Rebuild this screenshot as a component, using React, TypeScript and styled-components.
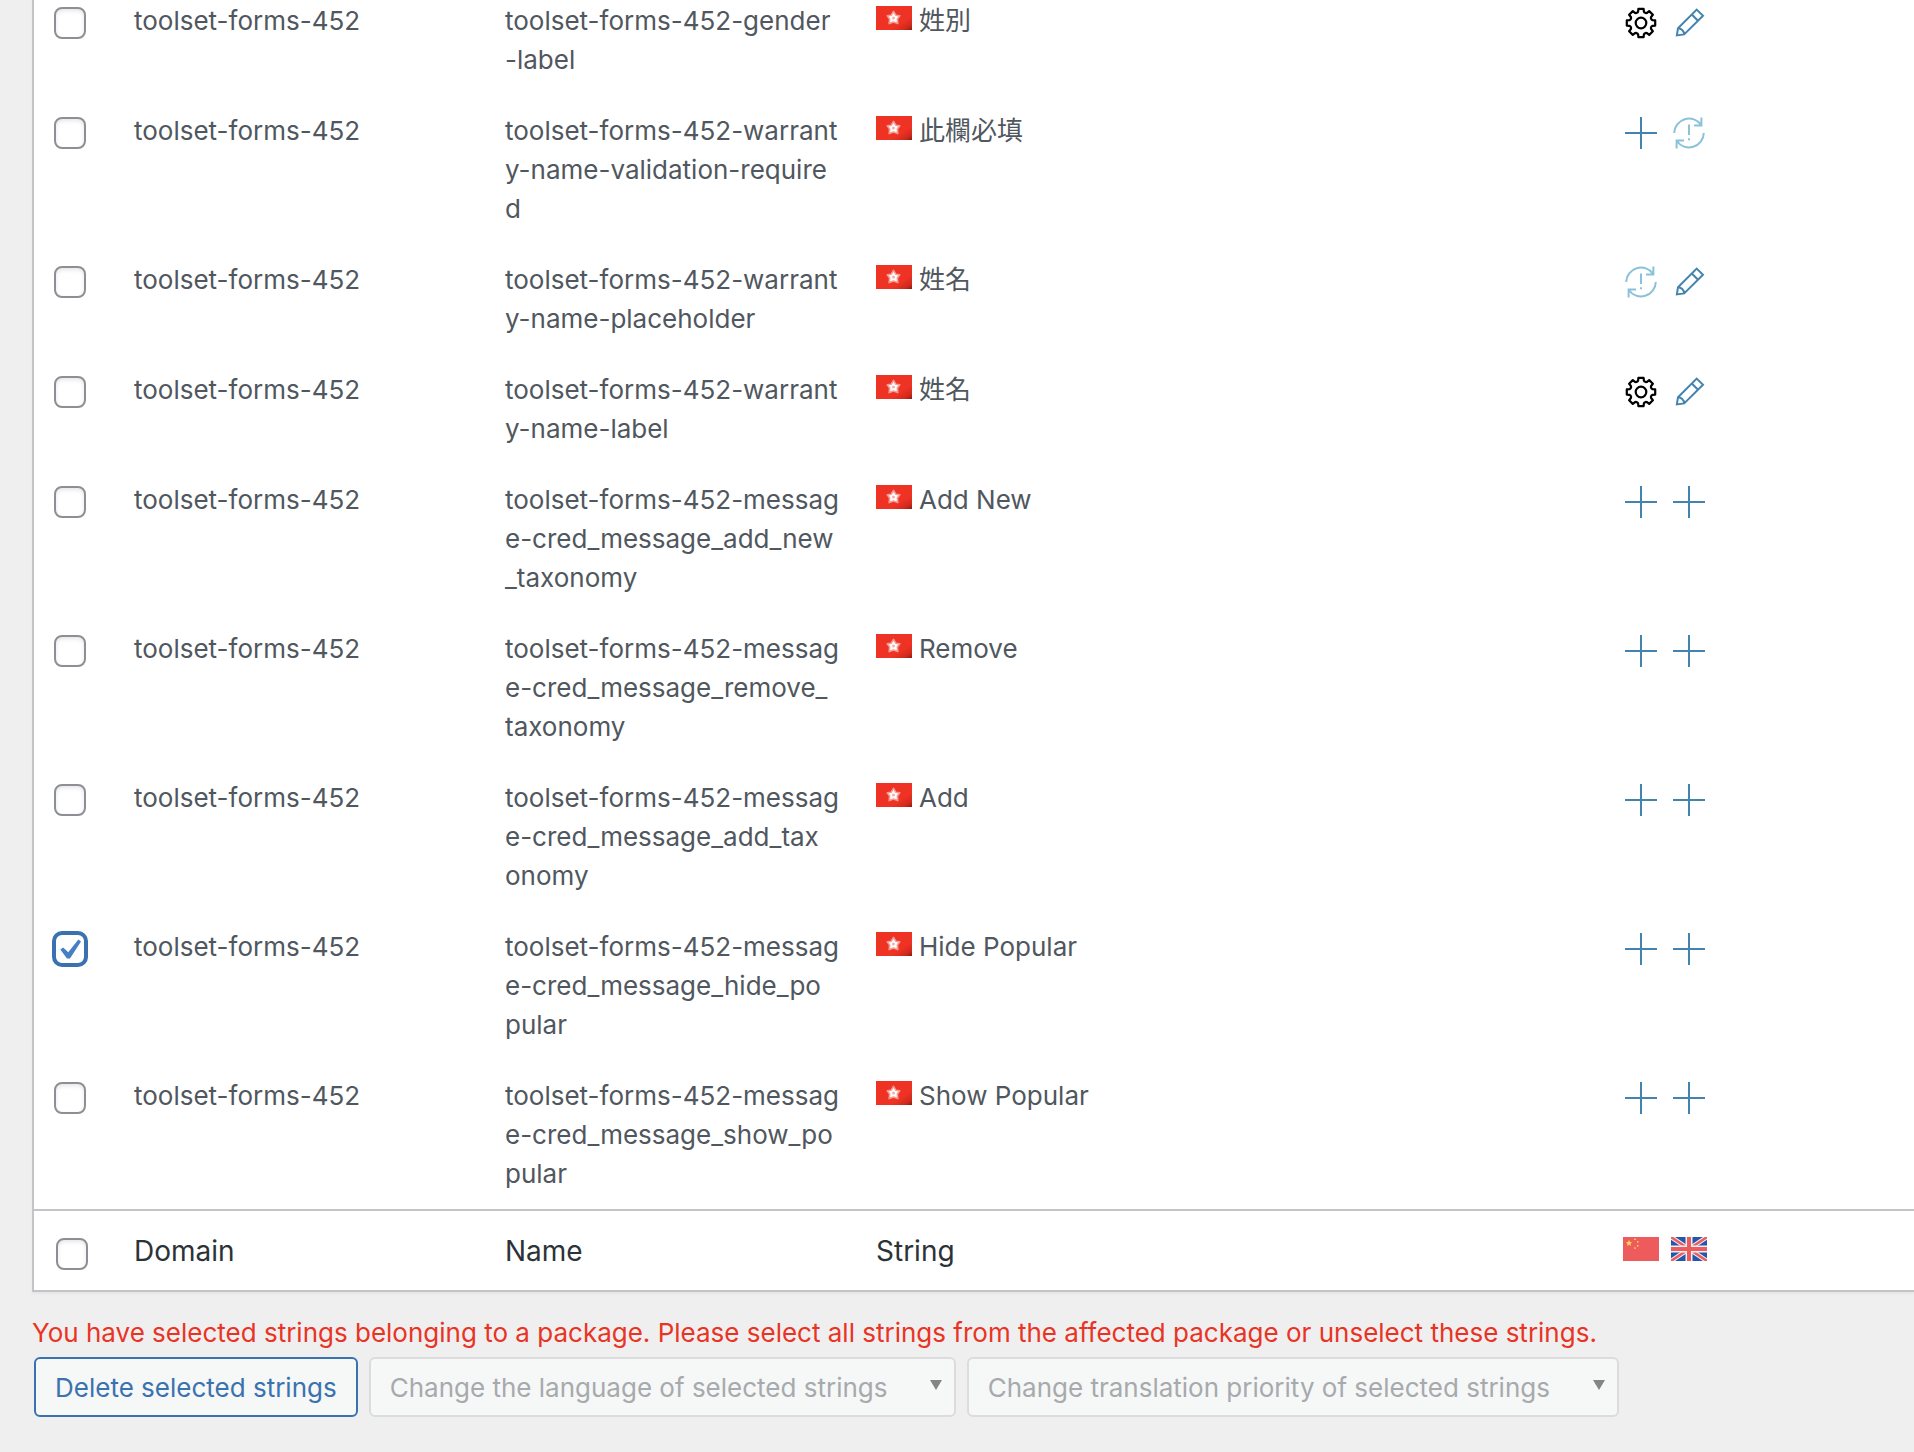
import React, { useState } from "react";
import styled, { createGlobalStyle } from "styled-components";

const GlobalStyle = createGlobalStyle`
  *, *::before, *::after { box-sizing: border-box; }
  body {
    margin: 0;
    background: #efefef;
    color: #50575e;
    font: 400 26px/39px Inter, "Noto Sans CJK TC", sans-serif;
  }
`;

const Page = styled.main`
  min-height: 100vh;
  padding-left: 32px;
  overflow: hidden;
`;

const Table = styled.table`
  width: 100%;
  margin-top: -15px;
  table-layout: fixed;
  border-collapse: separate;
  border-spacing: 0;
  background: #fff;
  border: solid #c3c4c7;
  border-width: 0 0 2px 2px;
  box-shadow: 0 2px 2px rgba(0, 0, 0, 0.04);
`;

const Col = styled.col<{ $w?: number }>`
  width: ${(p) => (p.$w ? `${p.$w}px` : "auto")};
`;

const Cell = styled.td`
  padding: 16px 20px;
  vertical-align: top;
  text-align: left;
  white-space: nowrap;
`;

const CheckCell = styled.th`
  padding: 22px 0 0 20px;
  vertical-align: top;
  text-align: left;
  line-height: 0;
`;

const IconCell = styled.td`
  padding: 20px 20px 0;
  vertical-align: top;
`;

const FootCell = styled.th`
  padding: 20px 20px 18px;
  border-top: 2px solid #c3c4c7;
  vertical-align: top;
  text-align: left;
  color: #2c3338;
  font-size: 28px;
  font-weight: 400;
  line-height: 41px;
`;

const FootCheckCell = styled(FootCell)`
  padding: 27px 0 0 22px;
  line-height: 0;
`;

const FootFlagCell = styled(FootCell)`
  padding: 26px 20px 0;
`;

const Checkbox = styled.input`
  appearance: none;
  display: inline-grid;
  place-content: center;
  width: 32px;
  height: 32px;
  margin: 0;
  border: 2px solid #8c8f94;
  border-radius: 8px;
  background: #fff;
  box-shadow: inset 0 2px 4px rgba(0, 0, 0, 0.1);

  &:checked {
    border-color: #3a72b0;
    box-shadow: 0 0 0 2px #3a72b0;
  }
  &:checked::before {
    content: "";
    width: 22px;
    height: 20px;
    background: #4680c2;
    clip-path: polygon(6% 53%, 19% 42%, 42% 66%, 88% 2%, 100% 12%, 50% 98%, 36% 98%);
  }
`;

const IconRow = styled.div`
  display: flex;
  gap: 12px;
`;

const IconButton = styled.button`
  display: block;
  width: 36px;
  height: 36px;
  padding: 0;
  border: 0;
  background: none;
  cursor: pointer;
`;

const Icon = styled.svg`
  display: block;
  width: 36px;
  height: 36px;
  fill: none;
  stroke: #4384ae;
  stroke-width: 2;
`;

const Flag = styled.svg`
  width: 36px;
  height: 24px;
`;

const StringFlag = styled(Flag)`
  margin-right: 7px;
`;

const BlockFlag = styled(Flag)`
  display: block;
`;

const Warning = styled.p`
  margin: 21px 0 5px;
  color: #e93425;
`;

const Actions = styled.div`
  display: flex;
  gap: 11px;
  padding-left: 2px;
`;

const DeleteButton = styled.button`
  height: 60px;
  padding: 0 19px;
  border: 2px solid #3a72b0;
  border-radius: 6px;
  background: #f6f7f7;
  color: #3a72b0;
  font: inherit;
`;

const SelectWrap = styled.div`
  position: relative;
`;

const Select = styled.select`
  appearance: none;
  display: block;
  height: 60px;
  padding: 0 66px 0 19px;
  border: 2px solid #dcdcde;
  border-radius: 6px;
  background: #f6f7f7;
  color: #a7aaad;
  font: inherit;
  opacity: 1;
`;

const Arrow = styled.svg`
  position: absolute;
  top: 23px;
  right: 14px;
  width: 12px;
  height: 10px;
  fill: #858585;
  pointer-events: none;
`;

type Status = "gear" | "pencil" | "plus" | "sync";

const gearPath = (() => {
  const tooth = [
    [-3.6, -10.4],
    [-2.9, -11.4],
    [-2.6, -14.2],
    [2.6, -14.2],
    [2.9, -11.4],
    [3.6, -10.4],
  ];
  const points: string[] = [];
  for (let i = 0; i < 8; i++) {
    const a = (i * Math.PI) / 4;
    tooth.forEach(([x, y]) => {
      const px = 18 + x * Math.cos(a) - y * Math.sin(a);
      const py = 18 + x * Math.sin(a) + y * Math.cos(a);
      points.push(`${px.toFixed(2)} ${py.toFixed(2)}`);
    });
  }
  return `M${points.join("L")}Z`;
})();

const labels: Record<Status, string> = {
  gear: "Translation in progress",
  pencil: "Edit translation",
  plus: "Add translation",
  sync: "Translation needs update",
};

function StatusIcon({ status }: { status: Status }) {
  switch (status) {
    case "gear":
      return (
        <Icon viewBox="0 0 36 36">
          <g stroke="#000" strokeLinejoin="round" strokeWidth="2.2">
            <path d={gearPath} />
            <circle cx="18" cy="18" r="5.3" />
          </g>
        </Icon>
      );
    case "pencil":
      return (
        <Icon viewBox="0 0 36 36">
          <path d="M25.7 4.6L32 10.8L13.2 29.4L5.9 30.4L7 23.2ZM20.8 9.5L27 15.7M7 23.2C10 23.2 13.2 26 13.2 29.4" />
        </Icon>
      );
    case "plus":
      return (
        <Icon viewBox="0 0 36 36">
          <path d="M2 18H34M18 2V34" />
        </Icon>
      );
    case "sync":
      return (
        <Icon viewBox="0 0 36 36">
          <g stroke="#8ac2da">
            <path d="M3.2 18A14.8 14.8 0 0 1 30.2 10M30.4 2.6V10.4H23M32.8 18A14.8 14.8 0 0 1 5.8 26M5.6 33.4V25.6H13" />
            <path d="M18 9.5V20M18 23.2V25.2" />
          </g>
        </Icon>
      );
  }
}

function HongKongFlag() {
  return (
    <StringFlag viewBox="0 0 36 24" role="img" aria-label="Hong Kong">
      <defs>
        <linearGradient id="hkShade" x1="0" y1="0" x2="1" y2="1">
          <stop offset="0.7" stopColor="#ee3224" />
          <stop offset="0.88" stopColor="#cf2a1c" />
          <stop offset="1" stopColor="#8c1a10" />
        </linearGradient>
      </defs>
      <rect width="36" height="24" fill="url(#hkShade)" />
      <path
        d="M17.5 5.4L19.8 9.2L23.8 9.8L21.4 13L21.8 17.6L17.5 16L13.2 17.6L13.6 13L11.2 9.8L15.2 9.2Z"
        fill="#fff"
        stroke="#f79a92"
        strokeWidth="1.6"
        strokeLinejoin="round"
      />
      <circle cx="17.5" cy="12" r="1.5" fill="#f9aea8" />
    </StringFlag>
  );
}

function ChinaFlag() {
  return (
    <BlockFlag viewBox="0 0 36 24" role="img" aria-label="Chinese">
      <rect width="36" height="24" fill="#ed5b5d" />
      <g fill="#fbd85a">
        <path d="M6 2.8L6.9 5.1L9.2 5.2L7.4 6.7L8 9L6 7.7L4 9L4.6 6.7L2.8 5.2L5.1 5.1Z" />
        <rect x="11.2" y="1.6" width="1.6" height="1.4" />
        <rect x="14" y="4" width="1.4" height="1.6" />
        <rect x="14" y="8" width="1.4" height="1.6" />
        <rect x="11.2" y="10.4" width="1.6" height="1.4" />
      </g>
    </BlockFlag>
  );
}

function UkFlag() {
  return (
    <BlockFlag viewBox="0 0 36 24" role="img" aria-label="English">
      <rect width="36" height="24" fill="#2557a8" />
      <path d="M0 0L36 24M36 0L0 24" stroke="#e6eaf2" strokeWidth="4.6" />
      <path d="M0 0L36 24M36 0L0 24" stroke="#ed5b5d" strokeWidth="2.4" />
      <path d="M18 0V24M0 12H36" stroke="#f0f0f4" strokeWidth="7" />
      <path d="M18 0V24M0 12H36" stroke="#ed5b5d" strokeWidth="4" />
    </BlockFlag>
  );
}

type StringRow = {
  name: string[];
  text: string;
  icons: [Status, Status];
};

const DOMAIN = "toolset-forms-452";

const rows: StringRow[] = [
  { name: ["toolset-forms-452-gender", "-label"], text: "姓別", icons: ["gear", "pencil"] },
  { name: ["toolset-forms-452-warrant", "y-name-validation-require", "d"], text: "此欄必填", icons: ["plus", "sync"] },
  { name: ["toolset-forms-452-warrant", "y-name-placeholder"], text: "姓名", icons: ["sync", "pencil"] },
  { name: ["toolset-forms-452-warrant", "y-name-label"], text: "姓名", icons: ["gear", "pencil"] },
  { name: ["toolset-forms-452-messag", "e-cred_message_add_new", "_taxonomy"], text: "Add New", icons: ["plus", "plus"] },
  { name: ["toolset-forms-452-messag", "e-cred_message_remove_", "taxonomy"], text: "Remove", icons: ["plus", "plus"] },
  { name: ["toolset-forms-452-messag", "e-cred_message_add_tax", "onomy"], text: "Add", icons: ["plus", "plus"] },
  { name: ["toolset-forms-452-messag", "e-cred_message_hide_po", "pular"], text: "Hide Popular", icons: ["plus", "plus"] },
  { name: ["toolset-forms-452-messag", "e-cred_message_show_po", "pular"], text: "Show Popular", icons: ["plus", "plus"] },
];

function ActionSelect({ label }: { label: string }) {
  return (
    <SelectWrap>
      <Select disabled aria-label={label}>
        <option>{label}</option>
      </Select>
      <Arrow viewBox="0 0 12 10" aria-hidden="true">
        <path d="M0 0H12L6 10Z" />
      </Arrow>
    </SelectWrap>
  );
}

export default function App() {
  const [selected, setSelected] = useState<number[]>([7]);
  const toggle = (i: number) =>
    setSelected((s) => (s.includes(i) ? s.filter((n) => n !== i) : [...s, i]));
  const all = selected.length === rows.length;

  return (
    <>
      <GlobalStyle />
      <Page>
        <Table>
          <colgroup>
            <Col $w={80} />
            <Col $w={371} />
            <Col $w={371} />
            <Col />
            <Col $w={311} />
          </colgroup>
          <tbody>
            {rows.map((row, i) => (
              <tr key={i}>
                <CheckCell scope="row">
                  <Checkbox
                    type="checkbox"
                    aria-label={`Select ${row.name.join("")}`}
                    checked={selected.includes(i)}
                    onChange={() => toggle(i)}
                  />
                </CheckCell>
                <Cell>{DOMAIN}</Cell>
                <Cell>
                  {row.name.map((part, n) => (
                    <React.Fragment key={n}>
                      {n > 0 && <br />}
                      {part}
                    </React.Fragment>
                  ))}
                </Cell>
                <Cell>
                  <HongKongFlag />
                  {row.text}
                </Cell>
                <IconCell>
                  <IconRow>
                    {row.icons.map((status, n) => (
                      <IconButton key={n} type="button" aria-label={labels[status]}>
                        <StatusIcon status={status} />
                      </IconButton>
                    ))}
                  </IconRow>
                </IconCell>
              </tr>
            ))}
          </tbody>
          <tfoot>
            <tr>
              <FootCheckCell>
                <Checkbox
                  type="checkbox"
                  aria-label="Select all"
                  checked={all}
                  onChange={() => setSelected(all ? [] : rows.map((_, i) => i))}
                />
              </FootCheckCell>
              <FootCell scope="col">Domain</FootCell>
              <FootCell scope="col">Name</FootCell>
              <FootCell scope="col">String</FootCell>
              <FootFlagCell scope="col">
                <IconRow>
                  <ChinaFlag />
                  <UkFlag />
                </IconRow>
              </FootFlagCell>
            </tr>
          </tfoot>
        </Table>
        <Warning>
          You have selected strings belonging to a package. Please select all strings from the
          affected package or unselect these strings.
        </Warning>
        <Actions>
          <DeleteButton type="button">Delete selected strings</DeleteButton>
          <ActionSelect label="Change the language of selected strings" />
          <ActionSelect label="Change translation priority of selected strings" />
        </Actions>
      </Page>
    </>
  );
}
